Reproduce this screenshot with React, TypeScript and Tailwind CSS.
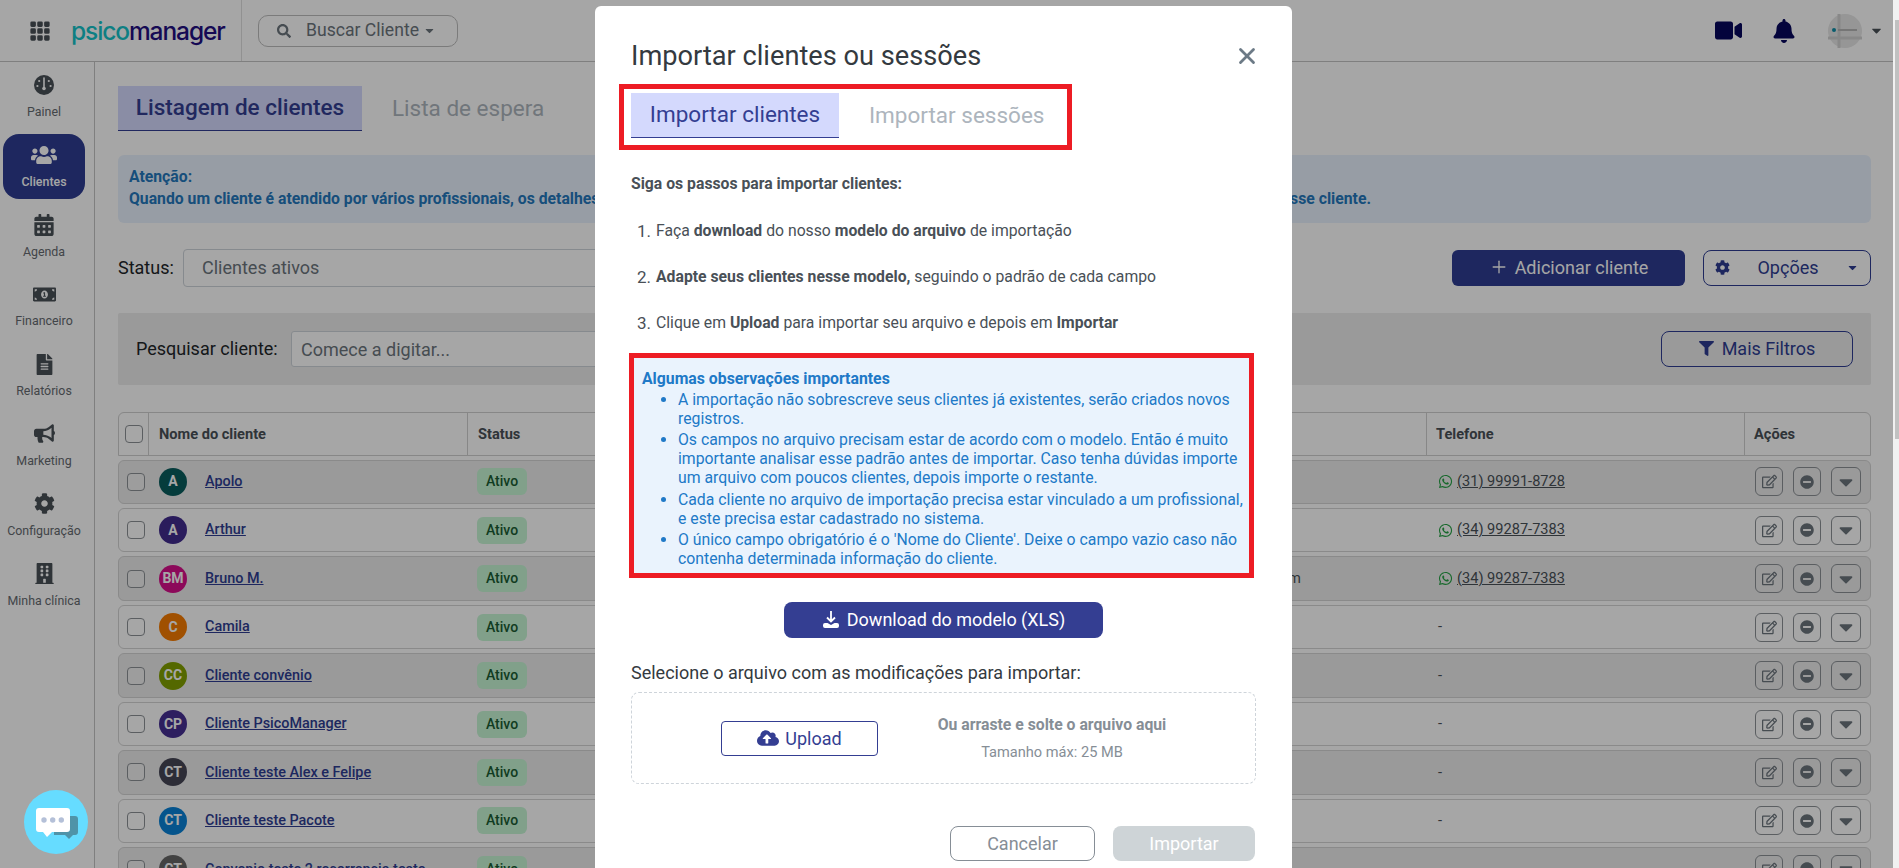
import {
  FaBell,
  FaBuilding,
  FaBullhorn,
  FaCalendarAlt,
  FaCaretDown,
  FaCloudUploadAlt,
  FaCog,
  FaFileAlt,
  FaFilter,
  FaMinusCircle,
  FaMoneyBillAlt,
  FaRegEdit,
  FaSearch,
  FaUsers,
  FaVideo,
  FaWhatsapp,
} from "react-icons/fa";
import { BsGrid3X3GapFill } from "react-icons/bs";
import { Plus, X } from "lucide-react";

function GaugeIcon({ size }: { size: number }) {
  return (
    <svg width={size} height={size} viewBox="0 0 20 20">
      <circle cx="10" cy="10" r="10" fill="currentColor" />
      <path d="M10 3v10" stroke="#fff" strokeWidth="1.6" strokeLinecap="round" />
      <circle cx="10" cy="13.5" r="1.8" fill="#fff" />
      <circle cx="5.2" cy="6" r="1.1" fill="#fff" />
      <circle cx="14.8" cy="6" r="1.1" fill="#fff" />
      <circle cx="3.4" cy="11" r="1.1" fill="#fff" />
      <circle cx="16.6" cy="11" r="1.1" fill="#fff" />
    </svg>
  );
}

const NAV = [
  { label: "Painel", icon: GaugeIcon, size: 20 },
  { label: "Clientes", icon: FaUsers, size: 26, active: true },
  { label: "Agenda", icon: FaCalendarAlt, size: 22 },
  { label: "Financeiro", icon: FaMoneyBillAlt, size: 23 },
  { label: "Relatórios", icon: FaFileAlt, size: 21 },
  { label: "Marketing", icon: FaBullhorn, size: 21 },
  { label: "Configuração", icon: FaCog, size: 21 },
  { label: "Minha clínica", icon: FaBuilding, size: 21 },
];

const ROWS = [
  { initials: "A", color: "#095c5d", name: "Apolo", phone: "(31) 99991-8728" },
  { initials: "A", color: "#412b8e", name: "Arthur", phone: "(34) 99287-7383" },
  { initials: "BM", color: "#d70f8a", name: "Bruno M.", phone: "(34) 99287-7383", email: "brunom@gmail.com" },
  { initials: "C", color: "#f67b00", name: "Camila" },
  { initials: "CC", color: "#82a000", name: "Cliente convênio" },
  { initials: "CP", color: "#452e92", name: "Cliente PsicoManager" },
  { initials: "CT", color: "#454555", name: "Cliente teste Alex e Felipe" },
  { initials: "CT", color: "#0882d8", name: "Cliente teste Pacote" },
  { initials: "CT", color: "#666666", name: "Convenio teste 2 recorrencia teste" },
];

function Sidebar() {
  return (
    <aside className="w-[95px] shrink-0 border-r border-[#c4c4c4] bg-white pt-[2px]">
      {NAV.map(({ label, icon: Icon, size, active }) => (
        <div
          key={label}
          className={`ml-[3px] mb-[4.8px] flex h-[65px] w-[82px] flex-col items-center rounded-[16px] pt-[11px] ${
            active ? "bg-[#2e3d92] text-white" : "text-[#495057]"
          }`}
        >
          <span className="flex h-[20px] items-center justify-center">
            <Icon size={size} />
          </span>
          <span className={`mt-[9px] text-[12.4px] leading-[16px] whitespace-nowrap ${active ? "font-medium" : "text-[#666b70]"}`}>
            {label}
          </span>
        </div>
      ))}
    </aside>
  );
}

function TopBar() {
  return (
    <header className="flex h-[62px] shrink-0 items-center border-b border-[#c4c4c4] bg-white">
      <BsGrid3X3GapFill size={22} className="ml-[29px] text-[#495057]" />
      <div className="ml-[20px] w-[170px] font-['Inter',sans-serif] text-[24.5px] leading-[32px] font-medium tracking-[-1.1px] text-[#230f82]">
        <span className="text-[#15c4ca]">psico</span>manager
      </div>
      <div className="h-full w-px bg-[#dfdfdf]" />
      <div className="ml-[16px] flex h-[32px] w-[200px] items-center rounded-[10px] border border-[#bdbdbd] pl-[18px] text-[17.6px] text-[#6c757d]">
        <FaSearch size={14} />
        <span className="ml-[15px] whitespace-nowrap">Buscar Cliente</span>
        <FaCaretDown size={13} className="ml-[4px]" />
      </div>
      <div className="flex-1" />
      <FaVideo size={27} className="text-[#07075c]" />
      <FaBell size={24} className="ml-[30px] text-[#07075c]" />
      <svg width="34" height="34" viewBox="0 0 34 34" className="ml-[32px]">
        <circle cx="17" cy="17" r="17" fill="#e6e6e6" />
        <path d="M11 0v34M0 24h34" stroke="#d2d2d2" strokeWidth="3" />
        <circle cx="6" cy="16" r="2" fill="#0f8ea8" />
        <path d="M10 16h19" stroke="#b5b5b5" strokeWidth="2" />
      </svg>
      <FaCaretDown size={15} className="ml-[7px] mr-[9px] text-[#495057]" />
    </header>
  );
}

function ClientRow({ row, striped }: { row: (typeof ROWS)[number]; striped: boolean }) {
  return (
    <div
      className={`mb-[4.15px] flex h-[44.33px] items-center rounded-[6px] border border-[#d4d4d4] pr-[9px] pl-[8px] text-[14.4px] ${
        striped ? "bg-[#ededed]" : "bg-white"
      }`}
    >
      <span className="h-[18px] w-[18px] rounded-[4px] border border-[#8c9196] bg-white/30" />
      <span
        className="ml-[14px] flex h-[28px] w-[28px] items-center justify-center rounded-full text-[14px] font-bold text-white"
        style={{ backgroundColor: row.color }}
      >
        {row.initials}
      </span>
      <a className="ml-[18px] w-[272px] font-medium whitespace-nowrap text-[#2e3d92] underline">{row.name}</a>
      <span className="flex h-[27px] w-[50px] items-center justify-center rounded-[6px] bg-[#c6f6d5] text-[14px] font-medium text-[#1a5c33]">
        Ativo
      </span>
      <span className="flex-1 pr-[137px] text-right text-[#495057]">{row.email}</span>
      <div className="flex w-[317px] items-center text-[14.6px] text-[#495057]">
        {row.phone ? (
          <>
            <FaWhatsapp size={15} className="text-[#25a244]" />
            <span className="ml-[4px] underline">{row.phone}</span>
          </>
        ) : (
          "-"
        )}
      </div>
      <div className="flex items-center gap-[10px] text-[#6c757d]">
        <span className="flex h-[29px] w-[28px] items-center justify-center rounded-[6px] border border-[#8c9196]">
          <FaRegEdit size={15} />
        </span>
        <span className="flex h-[29px] w-[28px] items-center justify-center rounded-[6px] border border-[#8c9196]">
          <FaMinusCircle size={14} />
        </span>
        <span className="flex h-[29px] w-[30px] items-center justify-center rounded-[6px] border border-[#8c9196]">
          <FaCaretDown size={22} />
        </span>
      </div>
    </div>
  );
}

function ClientList() {
  return (
    <main className="min-w-0 flex-1 pt-[24px] pr-[22px] pl-[23px]">
      <div className="flex h-[45px] items-center text-[22.5px]">
        <div className="flex h-full w-[244px] items-center justify-center border-b border-[#343e92] bg-[#d4d9fd] font-medium whitespace-nowrap text-[#343e92]">
          Listagem de clientes
        </div>
        <div className="ml-[30px] text-[#adb5bd]">Lista de espera</div>
      </div>

      <div className="mt-[24px] h-[68px] rounded-[6px] bg-[#e9f2fe] pt-[11px] pl-[11px] text-[15.75px] leading-[22px] font-bold text-[#2478bd]">
        <div>Atenção:</div>
        <div className="flex w-[1242px] justify-between whitespace-nowrap">
          <span>Quando um cliente é atendido por vários profissionais, os detalhes</span>
          <span>sse cliente.</span>
        </div>
      </div>

      <div className="mt-[26px] flex h-[38px] items-center justify-between">
        <div className="flex items-center text-[18px]">
          <span className="w-[65px] pb-[2px] text-[#212529]">Status:</span>
          <div className="flex h-[38px] w-[900px] items-center rounded-[4px] border border-[#ced4da] bg-white pb-[2px] pl-[18px] text-[#6c757d]">
            Clientes ativos
          </div>
        </div>
        <div className="flex items-center text-[18px]">
          <button className="flex h-[36px] w-[233px] items-center justify-center rounded-[6px] bg-[#2e3d92] pb-[2px] text-white">
            <Plus size={20} strokeWidth={1.6} />
            <span className="ml-[6px]">Adicionar cliente</span>
          </button>
          <button className="ml-[18px] flex h-[36px] w-[168px] items-center rounded-[8px] border border-[#2e3d92] pr-[11px] pb-[2px] pl-[11px] text-[#2e3d92]">
            <FaCog size={15} />
            <span className="flex-1 text-center">Opções</span>
            <FaCaretDown size={13} />
          </button>
        </div>
      </div>

      <div className="mt-[26px] flex h-[72px] items-center justify-between rounded-[2px] bg-[#ededed] pr-[18px] pl-[18px]">
        <div className="flex items-center text-[18px]">
          <span className="w-[155px] pb-[2px] whitespace-nowrap text-[#212529]">Pesquisar cliente:</span>
          <div className="flex h-[36px] w-[800px] items-center rounded-[3px] border border-[#ced4da] bg-white pl-[9px] text-[#6c757d]">
            Comece a digitar...
          </div>
        </div>
        <button className="flex h-[36px] w-[192px] items-center justify-center rounded-[8px] border border-[#2e3d92] pb-[2px] text-[18px] text-[#2e3d92]">
          <FaFilter size={15} />
          <span className="ml-[8px]">Mais Filtros</span>
        </button>
      </div>

      <div className="mt-[27px] mb-[3.5px] flex h-[44px] items-center rounded-t-[6px] border border-[#cfcfcf] bg-white text-[14.6px] font-bold text-[#495057]">
        <div className="flex h-full w-[30px] items-center justify-center border-r border-[#cfcfcf]">
          <span className="h-[18px] w-[18px] rounded-[4px] border border-[#8c9196]" />
        </div>
        <div className="flex h-full w-[319px] items-center border-r border-[#cfcfcf] pt-[2px] pl-[10px]">Nome do cliente</div>
        <div className="flex h-full w-[959px] items-center border-r border-[#cfcfcf] pt-[2px] pl-[10px]">Status</div>
        <div className="flex h-full w-[318px] items-center border-r border-[#cfcfcf] pt-[2px] pl-[9px]">Telefone</div>
        <div className="pt-[2px] pl-[9px]">Ações</div>
      </div>

      {ROWS.map((row, i) => (
        <ClientRow key={row.name} row={row} striped={i % 2 === 0 && i !== 3} />
      ))}
    </main>
  );
}

function ImportModal() {
  return (
    <div className="w-[697px] shrink-0 rounded-[6px] bg-white pt-[33px] pr-[36px] pb-[20px] pl-[36px] text-[15.75px] text-[#495057]">
      <div className="flex items-center justify-between">
        <h2 className="text-[27.2px] leading-[34px] font-normal text-[#343a40]">Importar clientes ou sessões</h2>
        <X size={26} strokeWidth={2.6} className="-mr-[4px] text-[#6c7a86]" />
      </div>

      {/* tabs */}
      <div className="mt-[11px] -ml-[12px] flex h-[66px] w-[453px] border-[5px] border-[#ed1c24] pt-[4px] pl-[7px] text-[22.5px]">
        <div className="flex h-[45px] w-[208px] items-center justify-center border-b border-[#343e92] bg-[#d4d9fd] text-[#343e92]">
          Importar clientes
        </div>
        <div className="ml-[30px] flex h-[45px] items-center text-[#adb5bd]">Importar sessões</div>
      </div>

      <p className="mt-[24px] leading-[20px] font-bold">Siga os passos para importar clientes:</p>
      <div className="mt-[27px] flex flex-col gap-[26px] pl-[6px] leading-[20px]">
        <div className="flex items-center">
          <span className="w-[19px] text-[17px]">1.</span>
          <span>
            Faça <b>download</b> do nosso <b>modelo do arquivo</b> de importação
          </span>
        </div>
        <div className="flex items-center">
          <span className="w-[19px] text-[17px]">2.</span>
          <span>
            <b>Adapte seus clientes nesse modelo,</b> seguindo o padrão de cada campo
          </span>
        </div>
        <div className="flex items-center">
          <span className="w-[19px] text-[17px]">3.</span>
          <span>
            Clique em <b>Upload</b> para importar seu arquivo e depois em <b>Importar</b>
          </span>
        </div>
      </div>

      {/* observacoes */}
      <div className="mt-[20px] -ml-[2px] h-[225px] w-[625px] border-[5px] border-[#ed1c24] bg-[#eaf3fd] pt-[11px] pl-[8px] text-[15.8px] leading-[19px] text-[#2079c7]">
        <p className="font-bold">Algumas observações importantes</p>
        <ul className="mt-[2px] list-disc pl-[36px]">
          <li className="mb-[2.4px]">A importação não sobrescreve seus clientes já existentes, serão criados novos registros.</li>
          <li className="mb-[2.4px]">
            Os campos no arquivo precisam estar de acordo com o modelo. Então é muito importante analisar esse padrão antes de importar. Caso tenha dúvidas importe um arquivo com poucos clientes, depois importe o restante.
          </li>
          <li className="mb-[2.4px]">
            Cada cliente no arquivo de importação precisa estar vinculado a um profissional, e este precisa estar cadastrado no sistema.
          </li>
          <li>O único campo obrigatório é o 'Nome do Cliente'. Deixe o campo vazio caso não contenha determinada informação do cliente.</li>
        </ul>
      </div>

      <button className="mx-auto mt-[24px] flex h-[36px] w-[319px] items-center justify-center rounded-[8px] bg-[#343e92] pb-[2px] text-[18px] text-white">
        <svg width="18" height="18" viewBox="0 0 18 18" fill="none">
          <path d="M9 1v10M5 7.5 9 11.5 13 7.5" stroke="currentColor" strokeWidth="1.8" />
          <path d="M1 15a2 2 0 0 1 2-2h2.5L9 15l3.5-2H15a2 2 0 0 1 2 2v1a2 2 0 0 1-2 2H3a2 2 0 0 1-2-2z" fill="currentColor" />
        </svg>
        <span className="ml-[7px]">Download do modelo (XLS)</span>
      </button>

      <p className="mt-[23px] text-[18px] leading-[24px] text-[#343a40]">Selecione o arquivo com as modificações para importar:</p>
      <div className="mt-[7px] flex h-[92px] items-center rounded-[8px] border border-dashed border-[#ced4da] pl-[89px]">
        <button className="flex h-[35px] w-[157px] items-center justify-center rounded-[4px] border border-[#343e92] text-[18px] text-[#343e92]">
          <FaCloudUploadAlt size={22} />
          <span className="ml-[6px]">Upload</span>
        </button>
        <div className="ml-[44px] w-[260px] text-center text-[#868e96]">
          <p className="leading-[20px] font-bold">Ou arraste e solte o arquivo aqui</p>
          <p className="mt-[7px] text-[14.6px] leading-[20px]">Tamanho máx: 25 MB</p>
        </div>
      </div>

      <div className="mt-[42px] flex justify-end gap-[18px] pr-px text-[18px]">
        <button className="h-[35px] w-[145px] rounded-[8px] border border-[#868e96] text-[#868e96]">Cancelar</button>
        <button className="h-[35px] w-[142px] rounded-[8px] bg-[#ced4d7] text-white">Importar</button>
      </div>
    </div>
  );
}

function ChatBubble() {
  return (
    <svg width="64" height="64" viewBox="0 0 64 64" className="fixed top-[790px] left-[24px] z-20">
      <circle cx="32" cy="32" r="32" fill="#66dcff" />
      <path d="M30 26h21a3 3 0 0 1 3 3v13a3 3 0 0 1-3 3h-2l-4 4-4-4H30z" fill="#4f93a8" />
      <path d="M15 18h28a3 3 0 0 1 3 3v18a3 3 0 0 1-3 3H28l-5 5-4-5h-4a3 3 0 0 1-3-3V21a3 3 0 0 1 3-3z" fill="#fff" />
      <circle cx="20" cy="30" r="2.7" fill="#b4c0d8" />
      <circle cx="28.7" cy="30" r="2.7" fill="#b4c0d8" />
      <circle cx="37.3" cy="30" r="2.7" fill="#b4c0d8" />
    </svg>
  );
}

export default function App() {
  return (
    <div className="flex h-screen overflow-hidden bg-white font-['Roboto',sans-serif]">
      <div className="relative flex min-w-0 flex-1 flex-col overflow-hidden">
        <TopBar />
        <div className="flex min-h-0 flex-1">
          <Sidebar />
          <ClientList />
        </div>
        {/* backdrop */}
        <div className="absolute inset-0 z-10 flex items-start justify-center overflow-hidden bg-black/35 pt-[6px] pr-[6px]">
          <ImportModal />
        </div>
      </div>
      <div className="w-[6px] shrink-0 bg-[#f1f1f1] pt-[20px] pl-[2px]">
        <div className="h-[419px] bg-[#c1c1c1]" />
      </div>
      <ChatBubble />
    </div>
  );
}
